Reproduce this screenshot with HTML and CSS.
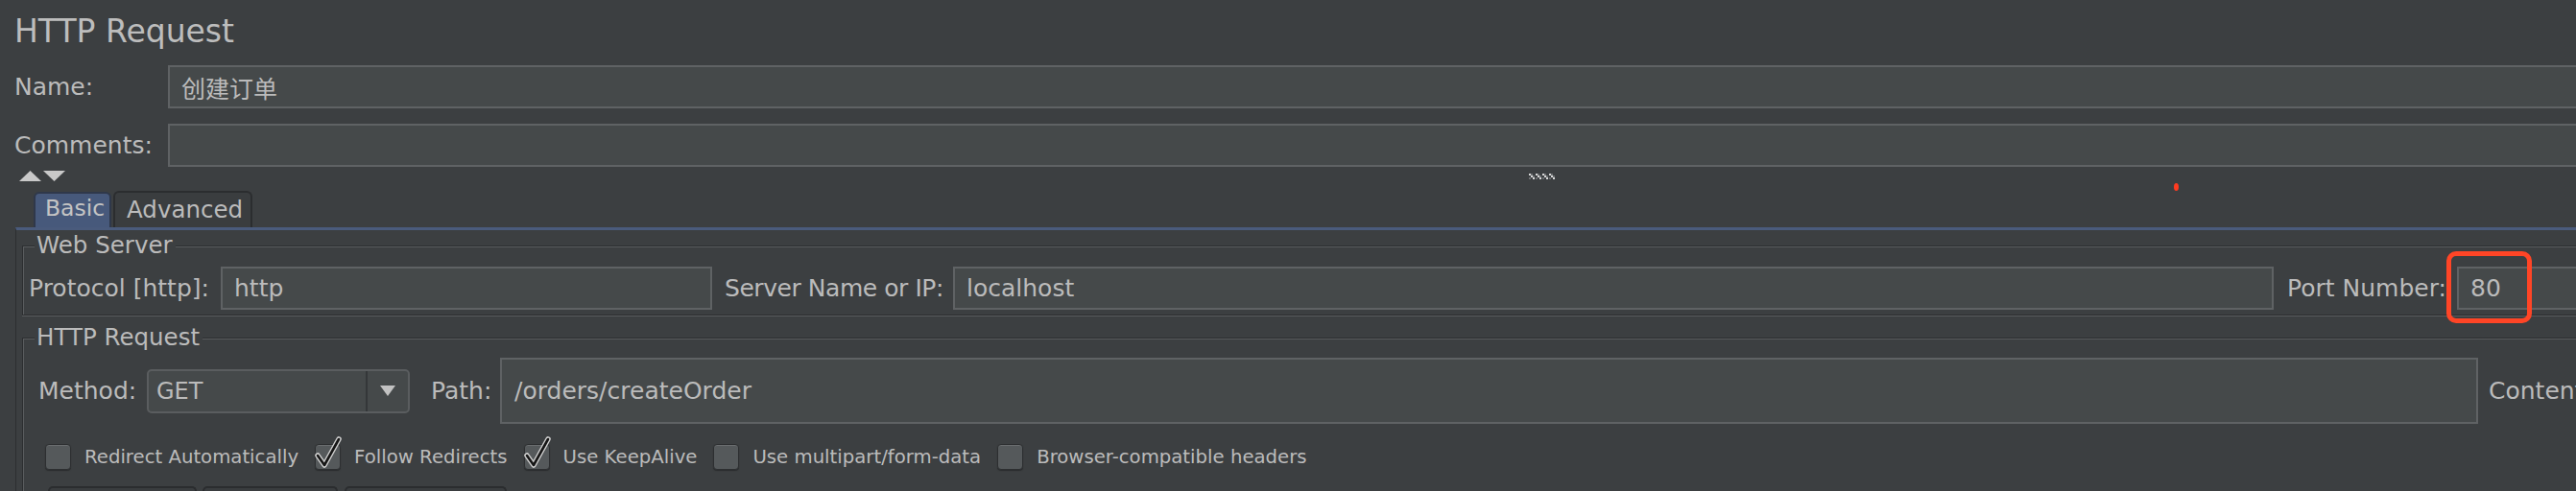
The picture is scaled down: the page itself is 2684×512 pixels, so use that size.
FILE: index.html
```html
<!DOCTYPE html>
<html>
<head>
<meta charset="utf-8">
<title>HTTP Request</title>
<link rel="stylesheet" href="styles.css">
</head>
<body>
<div class="page">
  <h1 class="title">HTTP Request</h1>

  <div class="meta-grid">
    <label class="lbl">Name:</label>
    <div class="field">创建订单</div>
    <label class="lbl">Comments:</label>
    <div class="field"></div>
  </div>

  <div class="split-bar">
    <svg class="arrows" width="50" height="12" viewBox="0 0 50 12">
      <polygon points="0,11 11.5,0 23,11" fill="#c9c9c9"/>
      <polygon points="25,0 48,0 36.5,11" fill="#c9c9c9"/>
    </svg>
    <svg class="grip" width="30" height="7" viewBox="0 0 30 7">
      <g fill="#d8d8d8">
        <rect x="0" y="0" width="2" height="2"/><rect x="2" y="2" width="2" height="2"/><rect x="4" y="4" width="2" height="2"/>
        <rect x="7" y="0" width="2" height="2"/><rect x="9" y="2" width="2" height="2"/><rect x="11" y="4" width="2" height="2"/>
        <rect x="14" y="0" width="2" height="2"/><rect x="16" y="2" width="2" height="2"/><rect x="18" y="4" width="2" height="2"/>
        <rect x="21" y="0" width="2" height="2"/><rect x="23" y="2" width="2" height="2"/><rect x="25" y="4" width="2" height="2"/>
      </g>
      <g fill="#6b6e70">
        <rect x="2" y="0" width="2" height="2"/><rect x="4" y="2" width="2" height="2"/><rect x="0" y="4" width="2" height="2"/>
        <rect x="9" y="0" width="2" height="2"/><rect x="11" y="2" width="2" height="2"/><rect x="7" y="4" width="2" height="2"/>
        <rect x="16" y="0" width="2" height="2"/><rect x="18" y="2" width="2" height="2"/><rect x="14" y="4" width="2" height="2"/>
        <rect x="23" y="0" width="2" height="2"/><rect x="25" y="2" width="2" height="2"/><rect x="21" y="4" width="2" height="2"/>
      </g>
    </svg>
  </div>

  <div class="tabs">
    <div class="tab tab-active">Basic</div>
    <div class="tab">Advanced</div>
  </div>

  <div class="panel">
    <fieldset class="group">
      <legend>Web Server</legend>
      <div class="row server-row">
        <label class="lbl w-protocol">Protocol [http]:</label>
        <div class="field f-protocol">http</div>
        <label class="lbl w-server">Server Name or IP:</label>
        <div class="field f-server">localhost</div>
        <label class="lbl w-port">Port Number:</label>
        <div class="field f-port">80</div>
      </div>
    </fieldset>

    <fieldset class="group group-req">
      <legend>HTTP Request</legend>
      <div class="row method-row">
        <label class="lbl w-method">Method:</label>
        <div class="combo">
          <span class="combo-value">GET</span>
          <span class="combo-btn">
            <svg width="16" height="11" viewBox="0 0 16 11"><polygon points="0,0 16,0 8,11" fill="#c2c2c2"/></svg>
          </span>
        </div>
        <label class="lbl w-path">Path:</label>
        <div class="field f-path">/orders/createOrder</div>
        <label class="lbl w-enc">Content encoding:</label>
        <div class="field f-enc"></div>
      </div>

      <div class="checks">
        <div class="check"><span class="box"></span><span class="check-text">Redirect Automatically</span></div>
        <div class="check"><span class="box"><svg class="tick" width="30" height="34" viewBox="0 0 30 34"><path d="M5 19 L12 29 L27 2" fill="none" stroke="#d0d0d0" stroke-width="5.5" stroke-linejoin="round" stroke-linecap="round"/><path d="M5 19 L12 29 L27 2" fill="none" stroke="#161616" stroke-width="2.6" stroke-linejoin="round" stroke-linecap="round"/></svg></span><span class="check-text">Follow Redirects</span></div>
        <div class="check"><span class="box"><svg class="tick" width="30" height="34" viewBox="0 0 30 34"><path d="M5 19 L12 29 L27 2" fill="none" stroke="#d0d0d0" stroke-width="5.5" stroke-linejoin="round" stroke-linecap="round"/><path d="M5 19 L12 29 L27 2" fill="none" stroke="#161616" stroke-width="2.6" stroke-linejoin="round" stroke-linecap="round"/></svg></span><span class="check-text">Use KeepAlive</span></div>
        <div class="check"><span class="box"></span><span class="check-text">Use multipart/form-data</span></div>
        <div class="check"><span class="box"></span><span class="check-text">Browser-compatible headers</span></div>
      </div>

      <div class="subtabs">
        <div class="subtab st1"></div>
        <div class="subtab st2"></div>
        <div class="subtab st3"></div>
      </div>
    </fieldset>
  </div>
</div>

<div class="annot-dot"></div>
<div class="annot-box"></div>
</body>
</html>
```

FILE: styles.css
```css
html, body {
  margin: 0;
  padding: 0;
  overflow: hidden;
  background: #3c3f41;
}

body {
  width: 2684px;
  height: 512px;
  position: relative;
  font-family: "DejaVu Sans", "Noto Sans CJK SC", sans-serif;
  color: #bbbbbb;
}

.page {
  width: 2760px;
  padding-top: 13px;
}

.title {
  margin: 0;
  padding-left: 15px;
  font-size: 33px;
  font-weight: normal;
  line-height: 40px;
  height: 40px;
  color: #bdbdbd;
}

.lbl {
  box-sizing: border-box;
  font-size: 25px;
  white-space: nowrap;
  color: #bbbbbb;
  flex: none;
}

.field {
  box-sizing: border-box;
  height: 45px;
  background: #45494a;
  border: 2px solid #5f6264;
  display: flex;
  align-items: center;
  padding-left: 12px;
  font-size: 25px;
  color: #bbbbbb;
  white-space: nowrap;
}

.meta-grid {
  margin-top: 15px;
  padding-left: 15px;
  display: grid;
  grid-template-columns: 160px 1fr;
  grid-auto-rows: 45px;
  row-gap: 16px;
  align-items: center;
}

.split-bar {
  margin-top: 4px;
  height: 11px;
  display: flex;
  align-items: flex-start;
  padding-left: 20px;
}

.arrows {
  display: block;
}

.grip {
  display: block;
  margin-left: 1523px;
  margin-top: 3px;
}

.tabs {
  margin-top: 10px;
  height: 38px;
  display: flex;
  align-items: flex-end;
  padding-left: 35px;
  gap: 2px;
}

.tab {
  box-sizing: border-box;
  height: 38px;
  padding: 0 8px 0 12px;
  font-size: 24.5px;
  line-height: 36px;
  border: 2px solid #2b2d2f;
  border-bottom: none;
  border-radius: 6px 6px 0 0;
  background: #3a3d3f;
  color: #bbbbbb;
}

.tab-active {
  height: 37px;
  width: 81px;
  padding-left: 10px;
  font-size: 23.5px;
  line-height: 30px;
  background: #47597b;
  border-color: #2f384a;
  color: #c4c4c4;
}

.panel {
  margin-left: 16px;
  border-top: 3px solid #4a5b7c;
  border-left: 1px solid #2c2e30;
  padding: 3px 0 0 6px;
}

.group {
  margin: 0;
  padding: 9px 0 5px 4px;
  min-width: 0;
  border: 1px solid #2c2e30;
  box-shadow: inset 1px 1px 0 #5a5d5f, 0 1px 0 #5a5d5f;
}

.group legend {
  margin-left: 8px;
  padding: 0 3px 0 2px;
  font-size: 24.5px;
  line-height: 26px;
  background: #3c3f41;
  color: #bbbbbb;
}

.group-req {
  margin-top: 10px;
  padding-top: 8px;
  padding-bottom: 0;
}

.row {
  display: flex;
  align-items: center;
}

.server-row .lbl {
  padding-left: 2px;
}

.w-protocol { width: 202px; }
.f-protocol { width: 512px; flex: none; }
.w-server { width: 240px; margin-left: 11px; letter-spacing: -0.45px; }
.f-server { width: 1376px; flex: none; }
.w-port { width: 179px; margin-left: 12px; }
.f-port { flex: 1; }

.method-row {
  height: 69px;
  padding-left: 10px;
}

.w-method { width: 115px; padding-left: 2px; }

.combo {
  box-sizing: border-box;
  width: 274px;
  height: 46px;
  flex: none;
  display: flex;
  border: 2px solid #5a5d5f;
  border-radius: 5px;
  background: #45494a;
}

.combo-value {
  flex: 1;
  display: flex;
  align-items: center;
  padding-left: 8px;
  font-size: 24px;
  color: #bbbbbb;
}

.combo-btn {
  width: 42px;
  display: flex;
  align-items: center;
  justify-content: center;
  border-left: 2px solid #343739;
}

.combo-btn svg {
  display: block;
}

.w-path { width: 72px; margin-left: 22px; }

.f-path {
  width: 2061px;
  flex: none;
  height: 69px;
  padding-left: 13px;
}

.w-enc { margin-left: 11px; }
.f-enc { width: 300px; margin-left: 12px; flex: none; }

.checks {
  margin-top: 21px;
  padding-left: 19px;
  display: flex;
  align-items: center;
  height: 27px;
}

.check {
  display: flex;
  align-items: center;
  margin-right: 17px;
}

.box {
  position: relative;
  box-sizing: border-box;
  width: 27px;
  height: 27px;
  border: 1px solid #2d2f31;
  border-radius: 4px;
  background: #55595b;
  box-shadow: inset 0 1px 0 #6a6d6f, 0 1px 1px #2a2c2e;
  flex: none;
}

.tick {
  position: absolute;
  left: -3px;
  top: -8px;
  overflow: visible;
}

.check-text {
  margin-left: 14px;
  font-size: 19.7px;
  white-space: nowrap;
  color: #bbbbbb;
}

.subtabs {
  margin-top: 17px;
  padding-left: 22px;
  display: flex;
  height: 30px;
}

.subtab {
  box-sizing: border-box;
  height: 30px;
  border: 2px solid #2b2d2f;
  border-bottom: none;
  border-radius: 5px 5px 0 0;
  background: #3a3d3f;
}

.st1 { width: 155px; }
.st2 { width: 141px; margin-left: 6px; }
.st3 { width: 169px; margin-left: 7px; }

.annot-dot {
  position: absolute;
  left: 2265px;
  top: 191px;
  width: 5px;
  height: 8px;
  border-radius: 50%;
  background: #ff3b20;
}

.annot-box {
  position: absolute;
  left: 2549px;
  top: 262px;
  width: 89px;
  height: 75px;
  box-sizing: border-box;
  border: 5px solid #ff4526;
  border-radius: 10px;
}
```
